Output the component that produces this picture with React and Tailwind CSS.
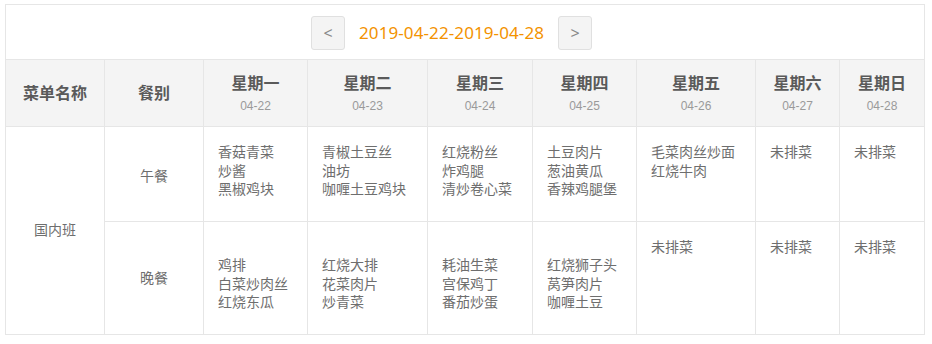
import { useState } from 'react'

const days = [
  { name: '星期一', date: '04-22', w: 'w-[104px]' },
  { name: '星期二', date: '04-23', w: 'w-[120px]' },
  { name: '星期三', date: '04-24', w: 'w-[105px]' },
  { name: '星期四', date: '04-25', w: 'w-[104px]' },
  { name: '星期五', date: '04-26', w: 'w-[119px]' },
  { name: '星期六', date: '04-27', w: 'w-[84px]' },
  { name: '星期日', date: '04-28', w: 'w-[85px]' }
]

const lunch = [
  ['香菇青菜', '炒酱', '黑椒鸡块'],
  ['青椒土豆丝', '油坊', '咖喱土豆鸡块'],
  ['红烧粉丝', '炸鸡腿', '清炒卷心菜'],
  ['土豆肉片', '葱油黄瓜', '香辣鸡腿堡'],
  ['毛菜肉丝炒面', '红烧牛肉'],
  [],
  []
]

const dinner = [
  ['鸡排', '白菜炒肉丝', '红烧东瓜'],
  ['红烧大排', '花菜肉片', '炒青菜'],
  ['耗油生菜', '宫保鸡丁', '番茄炒蛋'],
  ['红烧狮子头', '莴笋肉片', '咖喱土豆'],
  [],
  [],
  []
]

function MenuCell({ items, dinner }) {
  const empty = items.length === 0
  const pad = dinner && !empty ? 'pt-[34px]' : 'pt-[16px]'
  return (
    <td className={`border border-[#e6e6e6] align-top pl-[14px] pr-[10px] ${pad}`}>
      {empty ? (
        <div>未排菜</div>
      ) : (
        items.map((item) => <div key={item}>{item}</div>)
      )}
    </td>
  )
}

export default function App() {
  const [week] = useState('2019-04-22-2019-04-28')

  return (
    <div className="bg-white min-h-[344px] pt-[4px] pl-[5px]" style={{ fontFamily: '"Noto Sans", "Noto Sans CJK SC", sans-serif' }}>
      <div className="w-[920px]">
        <div className="h-[55px] border-t border-x border-[#e6e6e6] flex items-center pl-[305px] pt-[1px]">
          <button className="w-[34px] h-[34px] rounded-[3px] border border-[#e0e0e0] bg-[#f4f4f4] text-[#8a8a8a] text-[16px] leading-none flex items-center justify-center">
            &lt;
          </button>
          <span className="mx-[14px] text-[17px] text-[#f39200] tracking-[0.1px]">{week}</span>
          <button className="w-[34px] h-[34px] rounded-[3px] border border-[#e0e0e0] bg-[#f4f4f4] text-[#8a8a8a] text-[16px] leading-none flex items-center justify-center">
            &gt;
          </button>
        </div>
        <table className="w-[920px] table-fixed border-collapse text-[14px] leading-[18.5px] text-[#6e6e6e]">
          <colgroup>
            <col className="w-[99px]" />
            <col className="w-[99px]" />
            {days.map((d) => (
              <col key={d.date} className={d.w} />
            ))}
          </colgroup>
          <thead>
            <tr className="h-[67px] bg-[#f4f4f4]">
              <th className="border border-[#e6e6e6] text-[16px] font-semibold text-[#5a5a5a]">菜单名称</th>
              <th className="border border-[#e6e6e6] text-[16px] font-semibold text-[#5a5a5a]">餐别</th>
              {days.map((d) => (
                <th key={d.date} className="border border-[#e6e6e6] font-normal">
                  <div className="text-[16px] font-semibold text-[#5a5a5a] leading-[20px]">{d.name}</div>
                  <div className="text-[12px] text-[#9a9a9a] leading-[16px] mt-[5px]" style={{ fontFamily: '"Liberation Sans", sans-serif' }}>
                    {d.date}
                  </div>
                </th>
              ))}
            </tr>
          </thead>
          <tbody>
            <tr className="h-[95px]">
              <td rowSpan={2} className="border border-[#e6e6e6] text-center align-middle">
                国内班
              </td>
              <td className="border border-[#e6e6e6] text-center align-middle pt-[4px]">午餐</td>
              {lunch.map((items, i) => (
                <MenuCell key={i} items={items} />
              ))}
            </tr>
            <tr className="h-[113px]">
              <td className="border border-[#e6e6e6] text-center align-middle">晚餐</td>
              {dinner.map((items, i) => (
                <MenuCell key={i} items={items} dinner />
              ))}
            </tr>
          </tbody>
        </table>
      </div>
    </div>
  )
}
